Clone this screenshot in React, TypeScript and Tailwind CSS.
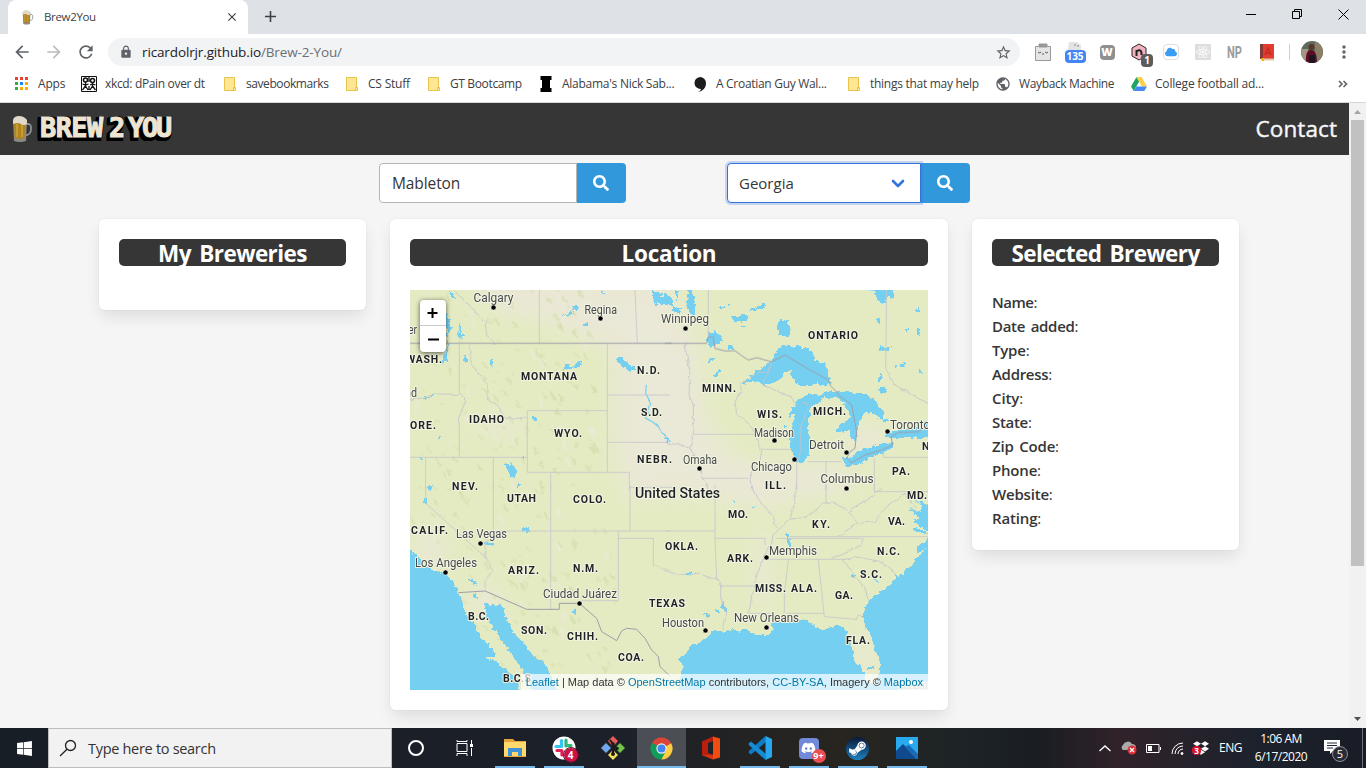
import React from "react";
import { MdArrowBack, MdArrowForward, MdRefresh, MdLock, MdStarBorder, MdAdd, MdClose, MdMoreVert, MdPublic } from "react-icons/md";
import { FaSearch, FaWindows, FaSteamSymbol, FaDropbox, FaDiscord, FaReact, FaCloud } from "react-icons/fa";

const Beer = ({ className }: { className: string }) => (
  <svg viewBox="0 0 21 27" className={className}>
    <path d="M14 8h3c3 1 3 10-2 11h-1" fill="none" stroke="#8d9092" strokeWidth="1.8" />
    <path d="M1 4h14l-1 21q-6 2-12 0z" fill="#8b8a84" />
    <path d="M2 6h11l-.5 16q-5 2-10 0z" fill="#b08520" />
    <path d="M4 8h2v13H4zM9 8h2v13H9z" fill="#c69c30" />
    <path d="M1 4q1-4 6-4t8 4v4q-3 2-6 0t-8 0z" fill="#e0d9ca" />
  </svg>
);

const Folder = () => (
  <svg viewBox="0 0 16 16" className="h-4 w-4">
    <path d="M2.500 1.500h10v10h1v3h-11z" fill="#ffe694" stroke="#e8c54a" />
    <path d="M11.500 14V11.500h2" fill="none" stroke="#e8c54a" />
  </svg>
);

const AppsIcon = () => (
  <svg viewBox="0 0 16 16" className="h-4 w-4">
    {["#ea4335", "#ea4335", "#ea4335", "#34a853", "#1a86f0", "#fbab00", "#34a853", "#fbab00", "#fbab00"].map((c, i) => (
      <rect key={i} x={1 + (i % 3) * 5} y={1 + Math.floor(i / 3) * 5} width="3" height="3" fill={c} />
    ))}
  </svg>
);

const Comic = () => (
  <svg viewBox="0 0 16 16" className="h-4 w-4">
    <path d="M0 0h16v16H0z" fill="#fff" />
    <g stroke="#111" fill="none">
      <circle cx="4.500" cy="4" r="2" strokeWidth="1.600" />
      <circle cx="11.500" cy="4.500" r="2" strokeWidth="1.600" />
      <path d="M4.500 6v4l-3 4M4.500 10l2.500 4M1.500 8l3 1 3-1M11.500 7v3l-2.500 4M11.500 10l3 4M9 9l2.500-1 3 1M8 1v5M8 10v4" strokeWidth="1.300" />
      <path d="M.5.5h15v15H.5z" />
    </g>
  </svg>
);

const SerifI = () => (
  <svg viewBox="0 0 16 16" className="h-4 w-4"><path d="M2.500 0h11v4H12v8h1.500v4h-11v-4H4V4H2.500z" /></svg>
);
const Quote = () => (
  <svg viewBox="0 0 16 16" className="h-4 w-4"><path d="M8 1a6 6 0 0 1 6 6c0 5-3 8-8 9 2-1 3-2 3-3a6 6 0 1 1-1-12z" fill="#1c1c1c" /></svg>
);
const Drive = () => (
  <svg viewBox="0 0 16 16" className="h-4 w-4">
    <path d="M5.500 1 0 10.500l2.700 4.500L8.200 5.600z" fill="#1ea362" />
    <path d="M5.500 1h5l5.500 9.500h-5.200z" fill="#ffcf48" />
    <path d="M5.400 10.500H16L13.300 15H2.700z" fill="#4688f4" />
  </svg>
);

const bookmarks = [
  { t: "Apps", w: "w-[67px]", k: "tracking-[-0.2px]", i: <AppsIcon /> },
  { t: "xkcd: dPain over dt", w: "w-[141px]", k: "tracking-[-0.34px]", i: <Comic /> },
  { t: "savebookmarks", w: "w-[122px]", k: "tracking-[-0.42px]", i: <Folder /> },
  { t: "CS Stuff", w: "w-[82px]", k: "tracking-[-0.2px]", i: <Folder /> },
  { t: "GT Bootcamp", w: "w-[112px]", k: "tracking-[-0.36px]", i: <Folder /> },
  { t: "Alabama's Nick Sab...", w: "w-[154px]", k: "tracking-[-0.26px]", i: <SerifI /> },
  { t: "A Croatian Guy Wal...", w: "w-[154px]", k: "tracking-[-0.3px]", i: <Quote /> },
  { t: "things that may help", w: "w-[149px]", k: "tracking-[-0.28px]", i: <Folder /> },
  { t: "Wayback Machine", w: "w-[136px]", k: "tracking-[-0.36px]", i: <MdPublic className="h-4 w-4 text-[#5f6368]" /> },
  { t: "College football ad...", w: "w-[160px]", k: "tracking-[-0.2px]", i: <Drive /> },
];

function Chrome() {
  return (
    <header className="shrink-0">
      <div className="flex h-[34px] items-end bg-[#dee1e6] pl-2">
        <div className="flex h-[34px] w-[240px] items-center rounded-t-lg bg-white pl-[14px] pr-[9px]">
          <Beer className="h-[15px] w-[12px]" />
          <span className="ml-[10px] grow text-[11.5px] tracking-[-0.33px] text-[#3c4043]">Brew2You</span>
          <MdClose className="h-[14px] w-[14px] text-[#3c4043]" />
        </div>
        <MdAdd className="mb-[8px] ml-[13px] h-[19px] w-[19px] text-[#3c4043]" />
        <svg viewBox="0 0 120 34" className="ml-auto h-[34px] w-[120px]" fill="none" stroke="#000">
          <path d="M0 14.500h10M46.500 11.500h7v7h-7zM48.500 11V9.500h7v7H54M92.500 9.500l10 10M102.500 9.500l-10 10" />
        </svg>
      </div>
      <div className="flex h-[38px] items-center bg-white pb-[2px] pl-3 text-[#5f6368]">
        <MdArrowBack className="h-5 w-5" />
        <MdArrowForward className="ml-3 h-5 w-5 text-[#babcbe]" />
        <MdRefresh className="ml-3 h-5 w-5" />
        <div className="ml-3 flex h-7 w-[912px] items-center rounded-full bg-[#f1f3f4] pl-[11px] pr-[8px]">
          <MdLock className="h-[14px] w-[14px]" />
          <span className="ml-[9px] grow text-[13.5px] tracking-[-0.13px] text-[#202124]">
            ricardolrjr.github.io<span className="text-[#6b6f74]">/Brew-2-You/</span>
          </span>
          <MdStarBorder className="h-[17px] w-[17px]" />
        </div>
        <div className="ml-[7px] flex h-full w-[256px] items-center">
          {[
            <svg key="a" viewBox="0 0 16 18" className="h-[18px] w-4"><path d="M4 1h8v3H4zM.5 3.500h15v14H.5z" fill="#e5e5e5" stroke="#999" /><path d="M4 1h8v3H4z" fill="#999" /><path d="M3 9q2 2 3 0M10 9q2 2 3 0M7 11h2" fill="none" stroke="#555" /></svg>,
            <div key="b" className="flex flex-col items-center">
              <svg viewBox="0 0 16 9" className="h-[9px] w-4"><path d="M2 1h8l4 3v5H1z" fill="#e3e3e3" /><path d="M8 3v2M11 4v2" stroke="#888" /></svg>
              <span className="flex h-[13px] w-[21px] items-center justify-center rounded-sm bg-[#4285f4] text-[10px] font-bold text-white">135</span>
            </div>,
            <div key="c" className="flex h-[15px] w-[15px] items-center justify-center rounded bg-[#8f8f8f] text-[11px] font-black text-white">W</div>,
            <div key="d" className="relative">
              <svg viewBox="0 0 16 18" className="h-[18px] w-4"><path d="m8 1 7 4v8l-7 4-7-4V5z" fill="#f2b3c0" stroke="#2e2528" /><path d="M5.500 13V7M5.500 8.500q4-3 5 1V12" fill="none" stroke="#222" strokeWidth="2" /></svg>
              <span className="absolute -right-[6px] top-[11px] flex h-[13px] w-[12px] items-center justify-center rounded-sm bg-[#5c5c5c] text-[10px] font-bold text-white">1</span>
            </div>,
            <div key="e" className="flex h-4 w-4 items-center justify-center rounded border border-[#dfdfdf] bg-white"><FaCloud className="h-[10px] w-[12px] text-[#3b9cf4]" /></div>,
            <div key="f" className="flex h-4 w-4 items-center justify-center bg-[#dedede]"><FaReact className="h-[14px] w-[14px] text-white" /></div>,
            <svg key="g" viewBox="0 0 20 18" className="h-[18px] w-5"><text x="2" y="15" fontSize="17" fontWeight="700" fill="#9b9b9b" textLength="15" lengthAdjust="spacingAndGlyphs" fontFamily="Roboto, sans-serif">NP</text></svg>,
            <svg key="h" viewBox="0 0 14 17" className="h-[17px] w-[14px]"><path d="M0 0h14v15H0z" fill="#e23b30" /><path d="M0 0h3v15H0z" fill="#863a35" /><path d="M1 15.500h13" stroke="#e9c7a6" strokeWidth="2" /><path d="m5 11 3-7 3 7M6 9h4" fill="none" stroke="#c02c22" strokeWidth="1.300" /><path d="M3 14v3" stroke="#f4b400" strokeWidth="2" /></svg>,
          ].map((icon, n) => (
            <div key={n} className="flex w-8 justify-center">{icon}</div>
          ))}
        </div>
        <div className="ml-[6px] h-4 w-px bg-[#cfd1d4]" />
        <svg viewBox="0 0 22 22" className="ml-[11px] h-[22px] w-[22px]">
          <defs><clipPath id="face"><circle cx="11" cy="11" r="11" /></clipPath></defs>
          <g clipPath="url(#face)"><path d="M0 0h22v22H0z" fill="#5c6a5b" /><path d="M0 8h7v14H0z" fill="#a39684" /><path d="M14 0h8v22h-8z" fill="#8b7f68" /><path d="M5 22q-1-13 5-13t6 13z" fill="#5f0d25" /><path d="M8 14h6v8H8z" fill="#1d1520" /><circle cx="10.500" cy="6" r="3" fill="#5b3527" /></g>
        </svg>
        <MdMoreVert className="ml-[11px] h-[20px] w-[20px]" />
      </div>
      <div className="flex h-[31px] items-center border-b border-[#d5d7da] bg-white pb-[6px] pl-[14px] text-[12px] text-[#3c4043]">
        {bookmarks.map((b) => (
          <div key={b.t} className={`flex shrink-0 items-center gap-2 whitespace-nowrap ${b.w}`}>
            {b.i}
            <span className={b.k}>{b.t}</span>
          </div>
        ))}
        <svg viewBox="0 0 10 10" className="ml-auto mr-[18px] h-[10px] w-[10px]" fill="none" stroke="#5f6368" strokeWidth="1.600"><path d="m1 2 3 3-3 3M5.500 2l3 3-3 3" /></svg>
      </div>
    </header>
  );
}

type Label = [string, number, number, number];
const states: Label[] = [
  ["WASH.", 406, 36, 363], ["ORE.", 410, 26, 429], ["IDAHO", 469, 35, 423], ["MONTANA", 521, 56, 380], ["N.D.", 637, 23, 374],
  ["S.D.", 641, 21, 416], ["MINN.", 702, 34, 392], ["WIS.", 757, 25, 418], ["MICH.", 813, 33, 415], ["ONTARIO", 808, 50, 339],
  ["WYO.", 554, 28, 437], ["NEBR.", 637, 35, 463], ["NEV.", 452, 26, 490], ["UTAH", 507, 29, 502], ["COLO.", 573, 33, 503],
  ["CALIF.", 411, 37, 534], ["ARIZ.", 508, 31, 574], ["N.M.", 573, 25, 572], ["TEXAS", 649, 36, 607], ["B.C.", 468, 21, 620],
  ["SON.", 521, 26, 634], ["CHIH.", 567, 31, 640], ["COA.", 618, 26, 661], ["B.C.S", 503, 28, 682], ["ILL.", 765, 21, 489],
  ["KY.", 812, 18, 528], ["MO.", 728, 20, 518], ["OKLA.", 665, 33, 550], ["ARK.", 727, 26, 562], ["MISS.", 755, 31, 592],
  ["ALA.", 791, 26, 592], ["GA.", 835, 18, 599], ["S.C.", 860, 22, 578], ["N.C.", 877, 23, 555], ["VA.", 888, 17, 525],
  ["MD.", 907, 20, 499], ["PA.", 892, 18, 475], ["N", 922, 8, 449.5], ["FLA.", 846, 24, 644],
];
const cities: Label[] = [
  ["Calgary", 473.500, 40, 302], ["Regina", 584.500, 32.500, 313.500], ["Winnipeg", 661, 48, 323], ["Madison", 754, 40, 436.500],
  ["Toronto", 890, 40, 429], ["Detroit", 809, 35, 449], ["Chicago", 751, 41, 471], ["Columbus", 820.500, 53, 483],
  ["Omaha", 683, 34, 464], ["Las Vegas", 456, 51, 538], ["Los Angeles", 415, 62, 567], ["Ciudad Juárez", 543, 74, 598],
  ["Houston", 662, 42, 627], ["New Orleans", 734, 65, 622], ["Memphis", 769, 48, 554.500], ["er", 408, 9, 334], ["nd", 405, 12, 397],
];
const dots: [number, number][] = [
  [493.500, 307.500], [600.500, 318.500], [685.500, 328.500], [774.500, 440.500], [794.500, 459.500], [846.500, 452.500], [887.500, 431.500], [846.500, 488.500],
  [699.500, 468.500], [480.500, 543.500], [445.500, 572.500], [579.500, 603.500], [705.500, 630.500], [766.500, 627.500], [766.500, 557.500],
];

const frac = (n: number) => n - Math.floor(n);
const hills = Array.from({ length: 300 }, (_, i) => {
  const u = frac(Math.sin(i * 12.9898 + 1) * 43758.5453);
  const v = frac(Math.sin(i * 78.233 + 2) * 24634.6345);
  const s = frac(Math.sin(i * 37.719 + 3) * 9631.123);
  const y = 290 + v * 400;
  return { x: 412 + u * 185 + (v > 0.6 ? 25 : 0), y, rx: 1.500 + s * 5, ry: 0.8 + u * 1.300, a: 25 + s * 50, o: 0.3 + s * 0.45, light: s > 0.82 };
});

const NW = "translate(405 285) scale(.333333)";
const NE = "translate(665 285) scale(.333333)";
const SW = "translate(405 485) scale(.333333)";
const SE = "translate(665 485) scale(.333333)";

function UsMap() {
  return (
    <svg viewBox="410 290 518 400" className="block h-[400px] w-[518px]" fontFamily="Roboto, sans-serif">
      <defs>
        <filter id="soft" x="-30%" y="-30%" width="160%" height="160%"><feGaussianBlur stdDeviation="10" /></filter>
        <filter id="coast" filterUnits="userSpaceOnUse" x="400" y="280" width="540" height="420" colorInterpolationFilters="sRGB">
          <feTurbulence type="fractalNoise" baseFrequency=".22" numOctaves="2" seed="4" result="n" />
          <feDisplacementMap in="SourceGraphic" in2="n" scale="6" xChannelSelector="R" yChannelSelector="G" />
        </filter>
        <filter id="wobble" filterUnits="userSpaceOnUse" x="400" y="280" width="540" height="420" colorInterpolationFilters="sRGB">
          <feTurbulence type="fractalNoise" baseFrequency=".15" numOctaves="2" seed="7" result="n" />
          <feDisplacementMap in="SourceGraphic" in2="n" scale="4" xChannelSelector="R" yChannelSelector="G" />
        </filter>
      </defs>
      <path d="M410 290h518v400H410z" fill="#e4ebc2" />
      <g filter="url(#soft)" fill="#eae8d6">
        <path d="M475 280h190l32 60 10 80 30 40 50 5 5 40-45 0-60-10-60 5-15-60 0-90-70-30-50-10z" />
        <ellipse cx="810" cy="480" rx="50" ry="16" />
        <ellipse cx="500" cy="425" rx="28" ry="7" />
        <ellipse cx="430" cy="550" rx="12" ry="30" />
        <ellipse cx="763" cy="570" rx="7" ry="45" />
        <ellipse cx="865" cy="655" rx="8" ry="30" />
        <ellipse cx="485" cy="600" rx="18" ry="12" />
        <ellipse cx="865" cy="440" rx="22" ry="14" />
      </g>
      <g filter="url(#coast)">
        {hills.map((h, i) => (
          <ellipse key={i} cx={h.x} cy={h.y} rx={h.rx} ry={h.ry} transform={`rotate(${h.a} ${h.x} ${h.y})`} fill={h.light ? "#ece8d8" : "#d3dcab"} opacity={h.o} />
        ))}
      </g>
      <g fill="#75cff0" filter="url(#coast)" shapeRendering="crispEdges">
        <g transform={SW}>
          <path d="M0 185 22 200 35 215 50 235 80 255 115 262 130 275 145 295 155 310 162 325 170 345 178 370 190 395 205 415 215 440 225 455 240 465 262 492 274 506 262 515 238 511 250 522 285 540 305 555 330 583 342 605V650H0z" />
          <path d="M238 352 270 364 285 355 300 370 300 395 315 420 325 445 345 465 365 490 385 515 400 520 420 540 430 560 440 575 470 650H400L365 575 345 545 330 520 310 495 290 465 275 440 255 415 245 400 240 375z" />
          <path d="M192 282 210 288 215 302 205 300zM204 325 216 330 217 343 207 335zM500 372 512 377 512 387 503 383zM236 175 262 170 264 180 245 180zM350 130 375 128 370 140 350 140zM335 0 352 2 342 10zM60 38 68 40 66 54 58 52zM70 0 84 5 78 15z" />
        </g>
        <g transform={SE}>
          <path d="M45 650V575L55 540 42 525 65 500 80 480 110 468 135 450 145 435 175 440 200 433 225 440 245 433 265 445 290 452 315 445 325 430 310 415 330 410 360 410 400 403 425 408 440 415 455 425 470 433 490 430 510 420 530 425 545 440 555 465 560 490 565 515 580 540 595 560 608 590 625 600 638 578 645 550 640 520 630 490 620 460 610 435 600 415 592 395 600 370 615 345 640 325 660 310 680 295 695 270 715 270 725 252 745 240 750 220 785 190 755 205 755 185 789 160H820V650z" />
          <path d="M730 70 750 85 765 100 740 105 789 140 820 160V60H785L770 45 765 80zM735 125 775 135 790 150 755 140z" />
          <path d="M362 140 372 150 378 185 370 180zM60 270 80 255 82 270zM115 385 135 390 128 400zM150 370 165 375 170 385 150 380zM172 345 185 370 185 382 170 370zM560 262 572 275 562 280zM628 280 642 290 630 290zM608 545 625 540 622 555 610 555zM262 62 275 66 265 68zM205 45 218 48 208 52z" />
        </g>
        <g transform={NE}>
          <path d="M226 298 260 270 300 240 325 225 340 192 365 180 385 183 420 185 440 200 455 228 480 235 490 265 498 295 480 305 460 295 430 305 405 300 385 285 375 265 382 254 360 262 350 280 330 292 300 300 280 290 245 295z" />
          <path d="M405 340 430 325 460 330 500 315 520 330 500 336 470 340 460 355 440 362 435 385 430 410 425 430 435 455 435 490 430 515 412 533 390 532 382 510 375 480 375 450 383 420 388 400 385 385 372 400 372 385 388 362z" />
          <path d="M515 320 560 322 600 325 625 345 640 360 658 385 655 402 640 400 620 385 600 380 590 400 576 430 578 455 570 472 560 460 555 435 535 440 512 440 530 415 548 408 556 395 550 375 535 352 515 340z" />
          <path d="M530 517 555 520 572 508 582 495 620 485 660 475 686 475 680 490 650 505 610 520 585 538 545 546zM650 458 680 440 720 430 760 425 789 405 820 400V455L720 460z" />
          <path d="M340 110 365 108 378 130 368 155 345 150 336 130zM130 145 150 138 165 150 175 165 155 180 140 185 125 175zM612 10H690L685 40 668 35 658 55 638 48 630 25z" />
          <path d="M66 10H78L92 60 88 95 74 85 66 60zM0 25 20 38 25 62 50 70 40 85 0 50zM30 15 42 20 35 50zM195 90 215 95 245 88 250 98 230 110 210 112zM160 65 180 63 170 72zM188 55 203 60 195 65zM255 75 300 55 298 68 265 80zM230 122 245 125 232 130zM125 228 150 215 150 225 135 232zM145 272 158 255 168 255 160 272zM188 180 200 182 205 195 190 190zM170 308 185 310 178 320zM355 412 365 425 358 430zM638 98 646 100 644 112 637 110zM645 180 655 190 675 188 670 198 645 195zM750 75 765 68 760 82zM755 130 770 145 768 155 755 145zM720 130 732 132 728 138zM700 240 720 232 722 245 705 250zM640 310 670 315 665 322 645 320zM645 265 653 275 648 290 643 280zM655 400 668 402 660 415zM758 250 772 255 770 265zM686 240 700 242 690 246zM0 455 15 468 5 472z" />
        </g>
        <g transform={NW}>
          <path d="M120 80 132 90 137 130 128 155 122 120zM125 15 140 25 152 38 145 40zM165 110 172 150 178 163 150 150 164 145zM178 210 190 215 182 232 176 225zM255 225 268 222 266 245 256 240zM120 190 128 195 126 230 105 235 118 222zM485 240 505 245 520 228 532 230 525 245 505 250 472 256zM632 222 650 217 672 240 692 252 680 257 655 245zM740 15 760 25 795 40V60H770L745 45zM748 50 760 55 755 62zM590 18 600 20 598 28zM534 115 546 115 545 122 535 122zM473 87 498 85 505 70 508 58 525 68 513 74 510 68 500 90 475 91zM384 396 396 398 395 410 386 405zM92 457 108 452 108 460zM297 535 315 540 318 532 338 555 330 575 320 578 310 560zM338 592 348 598 338 608zM45 515 52 528 42 528zM355 515 362 520 356 526zM72 597 82 608 78 615 70 608zM48 342 75 332 90 330 60 343z" />
        </g>
      </g>
      <g fill="none" stroke="#75cff0" strokeWidth="3.500" filter="url(#wobble)">
        <g transform={NW}>
          <path d="M724 298 722 325 735 350 728 378 722 400 745 412 765 430 780 455 797 470" />
          <path d="M165 115 158 150M130 165V190" />
        </g>
        <g transform={SE}><path d="M735 70 765 85M750 45 770 60" /></g>
      </g>
      <g fill="none" stroke="#c6c7cd" strokeWidth="2.500">
        <g transform={NW}>
          <path d="M403 15V175M690 15 697 175M163 175V325M367 377H607M607 175V562M607 330H795M607 472H780M367 377V562H673V615M437 562V615M15 517H367M62 517V615M265 517V615M163 430V517M673 607H800" />
        </g>
        <g transform={SW}><path d="M62 0V55L245 220M265 0V138M265 138H795M437 0V373M675 0V138M640 138V347H530M640 160H745V240" /></g>
        <g transform={NE}><path d="M85 448H270M130 15V155M290 493H380M110 580H250M395 530V615M430 530H530M483 530V615M628 520V615M655 500V517H789M665 15 662 250" /></g>
        <g transform={SE}><path d="M150 0V160L155 285M0 138H150M150 160H300V180M167 303H265M250 385H315M315 223H540M370 223 358 330V385M460 223 478 395 575 403M365 385H478M370 155H789M335 160H590M483 0V55M628 0V20H789" /></g>
      </g>
      <g fill="none" stroke="#c3c4cb" strokeWidth="2.500" filter="url(#wobble)">
        <g transform={NW}><path d="M150 20 200 70 240 110 245 150 268 178M195 175V220L205 245 235 285 250 300 248 345 275 360 300 400 325 402 367 395M163 325 182 348 160 400 163 430M15 345 45 340 95 327 163 328" /></g>
        <g transform={SW}><path d="M265 138V165L240 170 243 220 262 255 240 290V318M745 240 770 250 795 258" /></g>
        <g transform={NE}><path d="M60 175 65 210 75 260 72 330 85 360V448L75 490 100 530 110 575 125 600 130 615M0 475 40 478 75 490M228 296V320L210 350 215 385 250 415 270 445 280 480 290 495 285 530 260 560 255 585 262 615M290 298 340 320 380 335 390 365M410 355 432 360 405 430 408 495 395 530M662 250 690 300 740 330 789 355M228 296 280 262 312 262 320 230M312 262 292 298" /></g>
        <g transform={SE}><path d="M0 258 50 272 100 265 155 285 167 290V350L185 380 175 435M395 0 385 70 375 100 340 135 325 150 320 175 305 200 290 235 275 270 265 320 250 382M260 0 270 30 295 60 325 95 335 130M375 103 430 95 475 55 500 50 545 75 580 110 520 155M555 80 560 70 600 50 650 10M580 115 630 110 660 70 700 40 720 25 755 70M595 158 590 180 550 200 500 220M535 225 570 215 650 230 695 270M535 225 560 260 600 310 610 345M575 403 580 390 595 400" /></g>
      </g>
      <g fill="none" stroke="#9d9ea9" strokeWidth="3">
        <path transform={NW} d="M15 175H800" />
        <path transform={NE} d="M0 175H125L130 155 145 157 150 190 180 198 210 197 230 212 250 225 275 218 300 225 320 230 360 210 430 252 490 285 497 303 510 315 520 330 560 360 575 440 570 490 555 500 545 520 560 533 600 510 650 495 683 480 678 455 700 443 760 440 789 420" />
        <path transform={SW} d="M160 323 240 318 365 373H463V355H523L575 400 590 440 635 467 650 438 665 430 695 433 720 460 740 495 760 515 765 545 797 575" />
      </g>
      <g fill="#1f2227" stroke="#f3f4e2" strokeWidth="2" paintOrder="stroke" strokeLinejoin="round">
        <g fontSize="10.500" fontWeight="700">
          {states.map(([t, x, w, y]) => <text key={t} x={x} y={y} textLength={w}>{t}</text>)}
        </g>
        <g fontSize="12" fill="#46494c">
          {cities.map(([t, x, w, y]) => <text key={t} x={x} y={y} textLength={w} lengthAdjust="spacingAndGlyphs">{t}</text>)}
        </g>
        <text x="635" y="498" fontSize="14" fontWeight="500" textLength="85" lengthAdjust="spacingAndGlyphs">United States</text>
        <text x="898" y="689" fontSize="10.500" fill="#999" textLength="30">Baham</text>
      </g>
      {dots.map(([x, y]) => <circle key={x} cx={x} cy={y} r="2.500" stroke="#fff" strokeWidth=".5" />)}
    </svg>
  );
}

const Heading = ({ children }: { children: React.ReactNode }) => (
  <h2 className="flex h-[27px] items-center justify-center whitespace-pre rounded-[5px] bg-[#363636] pt-[2px] text-[22.5px] font-bold text-white">{children}</h2>
);

const card = "rounded-md bg-white p-5 shadow-[0_8px_16px_-2px_rgba(10,10,10,0.1),0_0_0_1px_rgba(10,10,10,0.02)]";

const SearchButton = () => (
  <button className="flex h-10 w-[49px] items-center justify-center rounded-r bg-[#3298dc] pr-px">
    <FaSearch className="h-4 w-4 text-white" />
  </button>
);

const fields = [
  ["Name", "tracking-[-0.5px]"], ["Date added", "tracking-[-0.3px] [word-spacing:2px]"], ["Type", "tracking-[-0.2px]"], ["Address", "tracking-[-0.3px]"], ["City", "tracking-[-0.1px]"],
  ["State", "tracking-[-0.3px]"], ["Zip Code", "tracking-[-0.2px] [word-spacing:2px]"], ["Phone", "tracking-[-0.2px]"], ["Website", "tracking-[-0.2px]"], ["Rating", "tracking-[-0.15px]"],
];

const extruded =
  "text-[#ede5d2] [-webkit-text-stroke:1px_#ede5d2] [text-shadow:-1px_1px_0_#000,-2px_2px_0_#000,-3px_3px_0_#000,-4px_4px_0_#000,-3px_4px_0_#000,-2px_4px_0_#000,0_4px_0_#000,-4px_2px_0_#000,-4px_0_0_#000,1px_-1px_0_#000,1px_1px_0_#000]";

function Page() {
  return (
    <main className="flex h-[625px] shrink-0 bg-[#f5f5f5]">
      <div className="w-[1349px] overflow-hidden">
        <nav className="flex h-[52px] items-center justify-between bg-[#363636] pl-3 pr-3">
          <div className="flex items-center">
            <Beer className="h-[27px] w-[21px]" />
            <div className="flex h-[40px] items-center pb-[3px] pl-[7px] font-['DejaVu_Sans_Mono',monospace] text-[27px] font-bold leading-[40px]">
              <span className={`w-[69px] tracking-[-0.6px] ${extruded}`}>BREW</span>
              <span className={`w-[19px] ${extruded}`}>2</span>
              <span className={`tracking-[-2.2px] ${extruded}`}>YOU</span>
            </div>
          </div>
          <a className="text-[22.5px] tracking-[0.1px] text-[#f7f7f7] [-webkit-text-stroke:0.4px_#f7f7f7]">Contact</a>
        </nav>
        <div className="mt-2 flex h-10 pl-[379px]">
          <div className="flex h-10 w-[198px] items-center rounded-l border border-[#b5b5b5] bg-white pl-[12px] pt-[2px] text-[15.5px] tracking-[-0.1px] text-[#363636]">Mableton</div>
          <SearchButton />
          <div className="z-10 ml-[101px] flex h-10 w-[194px] items-center justify-between rounded-l border border-[#3273dc] bg-white pl-[11px] pr-[15px] text-[15px] text-[#363636] shadow-[0_0_0_2px_rgba(50,115,220,0.25)]">
            Georgia
            <svg viewBox="0 0 14 9" className="h-[9px] w-[14px]" fill="none" stroke="#3273dc" strokeWidth="2.600" strokeLinecap="round" strokeLinejoin="round"><path d="m2 2 5 5 5-5" /></svg>
          </div>
          <SearchButton />
        </div>
        <div className="mt-4 flex items-start gap-6 pl-[99px]">
          <section className={`h-[91px] w-[267px] ${card}`}><Heading><span className="tracking-[-0.55px] [word-spacing:3px]">My Breweries</span></Heading></section>
          <section className={`h-[491px] w-[558px] ${card}`}>
            <Heading><span className="tracking-[-0.3px]">Location</span></Heading>
            <div className="relative mt-6">
              <UsMap />
              <div className="absolute left-[10px] top-[10px] w-[26px] rounded bg-white shadow-[0_1px_5px_rgba(0,0,0,0.65)]">
                <svg viewBox="0 0 26 52" className="block h-[52px] w-[26px]" stroke="#000" strokeWidth="2"><path d="M7.500 13h10M12.500 8v10M8 39.500h11" /><path d="M0 25.500h26" stroke="#ccc" strokeWidth="1" /></svg>
              </div>
              <p className="absolute bottom-0 right-0 flex h-4 items-center whitespace-pre bg-white/70 px-[5px] font-['Liberation_Sans',sans-serif] text-[11px] text-[#333]">
                <a className="text-[#0078a8]">Leaflet</a> | Map data © <a className="text-[#0078a8]">OpenStreetMap</a> contributors, <a className="text-[#0078a8]">CC-BY-SA</a>, Imagery © <a className="text-[#0078a8]">Mapbox</a>
              </p>
            </div>
          </section>
          <section className={`h-[331px] w-[267px] ${card}`}>
            <Heading><span className="tracking-[-0.6px] [word-spacing:3px]">Selected Brewery</span></Heading>
            <ul className="mt-[24px] text-[15px] leading-6 text-[#363636]">
              {fields.map(([f, k]) => <li key={f} className={k}><span className="font-semibold">{f}</span>:</li>)}
            </ul>
          </section>
        </div>
      </div>
      <div className="flex w-[17px] flex-col items-center bg-[#f1f1f1]">
        <svg viewBox="0 0 17 17" className="h-[17px] w-[17px]" fill="#a3a3a3"><path d="m5 11 3.500-4 3.500 4z" /></svg>
        <div className="h-[446px] w-[13px] bg-[#c1c1c1]" />
        <svg viewBox="0 0 17 17" className="mt-auto h-[17px] w-[17px]" fill="#505050"><path d="m5 6 3.500 4L12 6z" /></svg>
      </div>
    </main>
  );
}

const tasks = [
  { n: "files", u: "w-10", i: <svg viewBox="0 0 24 24" className="h-6 w-6"><path d="M1 3h9l2 2h11v16H1z" fill="#e8a33a" /><path d="M1 6h22v14H1z" fill="#ffd96b" /><path d="M5 20v-8h14v8h-4v-4H9v4z" fill="#3f93d6" /></svg> },
  { n: "slack", u: "w-10", i: <div className="relative"><svg viewBox="0 0 24 24" className="h-6 w-6"><circle cx="12" cy="12" r="11.500" fill="#fff" /><g strokeWidth="3.200" strokeLinecap="round"><path d="M9.500 4.500v6M4 10.500h4" stroke="#36c5f0" /><path d="M14 4v6M15 9.500h4" stroke="#2eb67d" /><path d="M10 15v4" stroke="#e01e5a" /><path d="M5 14.500h4.500" stroke="#e01e5a" /><path d="M15 14.500h5" stroke="#ecb22e" /></g></svg><span className="absolute -bottom-[2px] -right-[2px] flex h-[14px] w-[14px] items-center justify-center rounded-full bg-[#cf1246] text-[10px] font-bold text-white outline outline-1 outline-[#5d1230]">4</span></div> },
  { n: "git", u: "w-0", i: <svg viewBox="0 0 24 24" className="h-6 w-6"><path d="m12 0 5 5-5 6-5-6z" fill="#e85b5b" /><path d="m5 7 5 5-5 5-5-5z" fill="#72a9ee" /><path d="m19 7 5 5-5 5-5-5z" fill="#72c34a" /><path d="m12 14 5 5-5 5-5-5z" fill="#f8e05c" /><path d="M9 4v0l3 4v9M12 9l4 3" fill="none" stroke="#1b1b1b" strokeWidth="2" /><circle cx="12" cy="18" r="2" fill="#1b1b1b" /><circle cx="16" cy="12.500" r="1.800" fill="#1b1b1b" /><circle cx="12" cy="8" r="1.800" fill="#1b1b1b" /></svg> },
  { n: "chrome", u: "w-[49px]", i: <svg viewBox="0 0 24 24" className="h-[23px] w-[23px]"><path d="M12 12 2.040 6.250A11.500 11.500 0 0 1 21.960 6.250z" fill="#db4437" /><path d="M12 12 2.040 6.250A11.500 11.500 0 0 0 12 23.500z" fill="#0f9d58" /><path d="M12 12V23.500A11.500 11.500 0 0 0 21.960 6.250z" fill="#ffcd40" /><path d="M12 6.500h10.100L12 12zM7.500 14.500 2.500 6.250 10 14z" fill="#db4437" /><path d="m7.200 14.700 4.800 8.800 4.800-8.800z" fill="#0f9d58" /><path d="m12 23.500 4.800-8.800.7 3z" fill="#ffcd40" /><path d="M2.500 6.250 7.200 14.700 12 12z" fill="#0f9d58" /><circle cx="12" cy="12" r="5.400" fill="#f1f1f1" /><circle cx="12" cy="12" r="4.200" fill="#4285f4" /></svg> },
  { n: "office", u: "w-0", i: <svg viewBox="0 0 24 24" className="h-6 w-6"><path d="m3 5.500 11-5v4.500l-5 2v10l5 1.500v5L3 19z" fill="#b81f10" /><path d="m14 .5 7 2v19l-7 2V.5z" fill="#f04d12" /><path d="M3 19h11v4.500z" fill="#d63411" /></svg> },
  { n: "code", u: "w-10", i: <svg viewBox="0 0 24 24" className="h-6 w-6"><path d="m17.500 0 .5 6L3 18.500.5 16.500 1 15z" fill="#0d7cc4" /><path d="M.5 7.500 3 5.500 18 18l-.5 6L.8 9z" fill="#148bd3" /><path d="M17.500 0 24 3v18l-6.500 3V0z" fill="#27a7f0" /></svg> },
  { n: "discord", u: "w-10", i: <div className="relative flex h-[21px] w-[20px] items-center justify-center rounded bg-[#7289da]"><FaDiscord className="h-[14px] w-[15px] text-white" /><span className="absolute -bottom-[4px] -right-[7px] flex h-[14px] w-[14px] items-center justify-center rounded-full bg-[#ea4e50] text-[9px] font-bold text-white">9+</span></div> },
  { n: "steam", u: "w-10", i: <div className="flex h-[23px] w-[23px] items-center justify-center rounded-full bg-gradient-to-b from-[#0b1a3a] to-[#1a82c0]"><FaSteamSymbol className="h-[19px] w-[19px] text-white" /></div> },
  { n: "photos", u: "w-10", i: <svg viewBox="0 0 22 22" className="h-[22px] w-[22px]"><path d="M0 0h22v22H0z" fill="#29a9ee" /><path d="m0 14 7-7 15 15H0z" fill="#0f4a8c" /><path d="m9 10 4-2 9 9v5h-2z" fill="#1a6ab5" /><circle cx="15" cy="5" r="2" fill="#fff" /></svg> },
];

function Taskbar() {
  return (
    <footer className="flex h-10 shrink-0 bg-[linear-gradient(90deg,#181e26,#1c2029_45%,#28251f_62%,#1d2427_70%,#1a1d22_76%,#31222a_82%,#1c222c_92%,#191c25)] text-white">
      <div className="flex w-12 items-center justify-center"><FaWindows className="h-[17px] w-[17px]" /></div>
      <div className="flex w-[344px] items-center border border-[#bdbdbd] bg-[#f2f2f2] pl-[10px]">
        <svg viewBox="0 0 18 18" className="h-[18px] w-[18px]" fill="none" stroke="#222" strokeWidth="1.300"><circle cx="11.500" cy="6.500" r="5" /><path d="M8 10.200 1 17" /></svg>
        <span className="ml-[11px] pt-[2px] text-[14.5px] tracking-[-0.3px] text-[#333]">Type here to search</span>
      </div>
      <div className="flex w-[48px] items-center justify-center"><div className="h-4 w-4 rounded-full border-2 border-white" /></div>
      <div className="flex w-[48px] items-center justify-center">
        <svg viewBox="0 0 17 16" className="h-4 w-[17px]" fill="none" stroke="#fff"><path d="M1 3.500h10v8H1zM1 0v1.500h10V0M1 16v-2.500h10V16M15.500 0v4M15.500 8v8" /><path d="M14 4h3v3h-3z" fill="#fff" stroke="none" /></svg>
      </div>
      <div className="ml-[2px] flex">
        {tasks.map((t) => (
          <div key={t.n} className={`flex w-[49px] flex-col items-center ${t.n === "chrome" ? "bg-[#4b4e54]" : ""}`}>
            <div className="flex h-[38px] items-center justify-center pt-[2px]">{t.i}</div>
            <div className={`h-[2px] bg-[#76b9ed] ${t.u}`} />
          </div>
        ))}
      </div>
      <div className="ml-auto flex items-center text-[12px]">
        <svg viewBox="0 0 12 7" className="h-[7px] w-3" fill="none" stroke="#fff" strokeWidth="1.300"><path d="m.5 6 5.500-5 5.500 5" /></svg>
        <svg viewBox="0 0 18 14" className="ml-[9px] h-[14px] w-[18px]"><path d="M4 9H3a3 3 0 0 1 0-5 5 5 0 0 1 9-1q4 0 4 4l-2 2z" fill="#a9a9a9" /><circle cx="12" cy="9" r="4.500" fill="#e02d35" /><path d="m10 7 4 4m0-4-4 4" stroke="#fff" strokeWidth="1.300" /></svg>
        <svg viewBox="0 0 15 9" className="ml-[8px] h-[9px] w-[15px]" fill="none" stroke="#fff"><path d="M.5.5h12.500v8H.5zM14.500 3v3" /><path d="M2 2h4v5H2z" fill="#fff" stroke="none" /></svg>
        <svg viewBox="0 0 13 13" className="ml-[10px] h-[13px] w-[13px]" fill="none" stroke="#fff"><path d="M1 12A11 11 0 0 1 12 1M4 12a8 8 0 0 1 8-8M7 12a5 5 0 0 1 5-5" /><circle cx="11" cy="11.500" r="1" fill="#fff" /></svg>
        <div className="relative ml-[9px]"><FaDropbox className="h-[16px] w-[16px]" /><span className="absolute -left-px top-[6px] flex h-[9px] w-[9px] items-center justify-center rounded-sm bg-[#d41331] text-[8px] font-bold">3</span></div>
        <span className="ml-[10px] w-[26px] tracking-[-0.5px]">ENG</span>
        <div className="ml-[9px] flex w-[54px] flex-col items-center whitespace-nowrap leading-[18px] tracking-[-0.5px]"><span>1:06 AM</span><span>6/17/2020</span></div>
        <div className="relative ml-[16px] mr-[14px] h-[24px] w-[24px]">
          <svg viewBox="0 0 24 24" className="h-6 w-6"><path d="M0 4h16v11H9l-3 3v-3H0z" fill="#fff" /><path d="M3 7h10M3 9.500h10M3 12h6" stroke="#222832" /></svg>
          <span className="absolute left-[8px] top-[10px] flex h-4 w-4 items-center justify-center rounded-full border border-[#8b8f95] bg-[#2a2d35] text-[11px]">5</span>
        </div>
        <div className="mr-[3px] h-10 w-px bg-[#6c7077]" />
      </div>
    </footer>
  );
}

export default function App() {
  return (
    <div className="flex h-[768px] w-[1366px] flex-col overflow-hidden font-['Open_Sans','Noto_Sans',sans-serif]">
      <Chrome />
      <Page />
      <Taskbar />
    </div>
  );
}
